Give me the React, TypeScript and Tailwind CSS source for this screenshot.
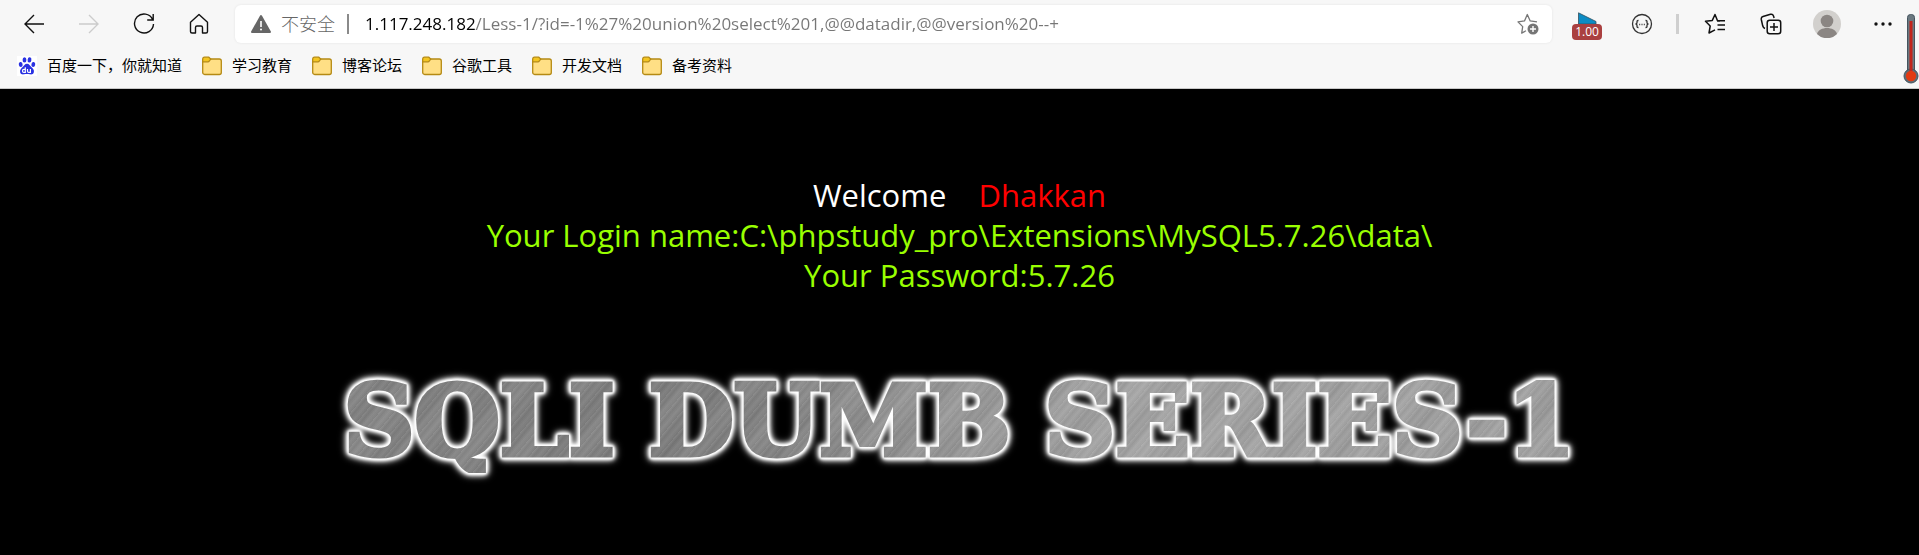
import React from 'react';

const url = '1.117.248.182/Less-1/?id=-1%27%20union%20select%201,@@datadir,@@version%20--+';

const folders = ['学习教育', '博客论坛', '谷歌工具', '开发文档', '备考资料'];

interface ToolButtonProps {
    label: string;
    disabled?: boolean;
    children: React.ReactNode;
}

const ToolButton: React.FC<ToolButtonProps> = ({ label, disabled, children }) => (
    <button type="button" aria-label={label} disabled={disabled} className="flex h-8 w-8 shrink-0 items-center justify-center">
        {children}
    </button>
);

const IconArrow: React.FC<{ className: string }> = ({ className }) => (
    <svg width="22" height="22" viewBox="0 0 22 22" fill="none" stroke="currentColor" strokeWidth="1.4" className={className}>
        <path d="M21 11H2M11 2L2 11l9 9" />
    </svg>
);

const IconReload: React.FC = () => (
    <svg width="22" height="22" viewBox="0 0 22 22" fill="none" stroke="#111" strokeWidth="1.4">
        <path d="M19.6 6.4A9.5 9.5 0 1 0 20.5 11M20.2 1v6h-6" />
    </svg>
);

const IconHome: React.FC = () => (
    <svg width="22" height="22" viewBox="0 0 22 22" fill="none" stroke="#111" strokeWidth="1.4" strokeLinejoin="round">
        <path d="M2.5 9.2L11 1.6l8.500 7.600V18.500a1.500 1.500 0 0 1-1.500 1.500h-3.500v-5.500a1.500 1.500 0 0 0-1.500-1.500h-4a1.500 1.500 0 0 0-1.500 1.500V20H4a1.500 1.500 0 0 1-1.500-1.500z" />
    </svg>
);

const IconWarning: React.FC = () => (
    <svg width="20" height="20" viewBox="0 0 20 20" className="shrink-0">
        <path d="M10 2L19 18H1z" fill="#666" stroke="#666" strokeWidth="2" strokeLinejoin="round" />
        <path d="M10 7v6" stroke="#fff" strokeWidth="1.600" />
        <circle cx="10" cy="15.500" r="1" fill="#fff" />
    </svg>
);

const IconStarAdd: React.FC = () => (
    <svg width="22" height="22" viewBox="0 0 22 22" fill="none">
        <path d="M9 17.800l-4.300 2.300 1-6.500L1 8.900l6.500-1L10.300 1.500l2.900 6.400 6.800 1" stroke="#767676" strokeWidth="1.300" strokeLinejoin="round" />
        <circle cx="16" cy="16" r="5.500" fill="#767676" />
        <path d="M16 13v6M13 16h6" stroke="#fff" strokeWidth="1.400" />
    </svg>
);

const IconBraces: React.FC = () => (
    <svg width="22" height="22" viewBox="0 0 22 22" fill="none" stroke="#333" strokeWidth="1.300">
        <circle cx="11" cy="11" r="9.500" />
        <path d="M7.500 7.500H7q-1 0-1 1V10l-1 1 1 1v1.500q0 1 1 1h.5M14.500 7.500h.5q1 0 1 1V10l1 1-1 1v1.500q0 1-1 1h-.5" />
        <path d="M8.200 11.500h1M10.500 11.500h1M12.800 11.500h1" />
    </svg>
);

const IconFavorites: React.FC = () => (
    <svg width="22" height="22" viewBox="0 0 22 22" fill="none" stroke="#111" strokeWidth="1.500" strokeLinejoin="round">
        <path d="M16 7.800h-2.500L11 1.500 8.300 7.400 1.500 8.300l4.700 4.700L5 20l6-3.200" />
        <path d="M13 7.800h8M13.500 12h7.500M13.500 16.500h7.500" />
    </svg>
);

const IconCollections: React.FC = () => (
    <svg width="22" height="22" viewBox="0 0 22 22" fill="none" stroke="#111" strokeWidth="1.500">
        <path d="M5 15.500C3.500 15 3 14 2.700 12.800L1.300 6.500C1 4.800 1.500 4 3 3.500l7.500-2.200c1.500-.4 2.500.2 3 1.700l.6 2" />
        <rect x="7.200" y="7.200" width="13.500" height="13.500" rx="2.500" />
        <path d="M14 10v8M10 14h8" />
    </svg>
);

const IconAvatar: React.FC = () => (
    <svg width="28" height="28" viewBox="0 0 28 28">
        <circle cx="14" cy="14" r="14" fill="#d2d0cd" />
        <circle cx="14" cy="11" r="6.300" fill="#8b8683" />
        <path d="M4 24c2-8 18-8 20 0A14 14 0 0 1 4 24z" fill="#8b8683" />
    </svg>
);

const IconFolder: React.FC = () => (
    <svg width="20" height="20" viewBox="0 0 20 20" className="shrink-0">
        <rect x="0.700" y="3" width="18.600" height="15.500" rx="2" fill="#ffdf85" stroke="#b58a14" strokeWidth="1.300" />
        <path d="M.7 5.800V3q0-1.800 1.800-1.800h4.300L8.800 3 7.200 5.200q-.4.600-1.200.6z" fill="#f3c522" stroke="#b58a14" strokeWidth="1.200" />
    </svg>
);

const IconBaidu: React.FC = () => (
    <svg width="20" height="20" viewBox="0 0 20 20" className="shrink-0">
        <rect width="20" height="20" fill="#fff" />
        <g fill="#2a32e2">
            <ellipse cx="3.700" cy="8.500" rx="1.900" ry="2.500" transform="rotate(-12 3.700 8.500)" />
            <ellipse cx="7.500" cy="3.900" rx="1.900" ry="2.700" />
            <ellipse cx="12.500" cy="3.900" rx="1.900" ry="2.700" transform="rotate(8 12.500 3.900)" />
            <ellipse cx="16.300" cy="8.500" rx="1.900" ry="2.500" transform="rotate(12 16.300 8.500)" />
            <path d="M10 7.800c2.200 0 3 1.900 4.300 3.300 1.500 1.500 3 2.600 2.600 4.800-.4 2.300-2.200 2.700-4 2.400-2-.3-3.800-.3-5.800 0-1.900.3-3.600-.1-4-2.400-.3-2.200 1.200-3.300 2.600-4.800C7 9.700 7.800 7.800 10 7.800z" />
        </g>
        <path d="M8.300 11.200v5.200H6.800q-1.300 0-1.300-1.500t1.300-1.500h1.500M10.500 13v2.200q0 1.200 1.200 1.200h1.700V13" fill="none" stroke="#fff" strokeWidth="1.200" />
    </svg>
);

const IconThermometer: React.FC = () => (
    <svg width="16" height="72" viewBox="0 0 16 72">
        <rect x="4.500" y="1.500" width="7" height="62" rx="3" fill="#6b7880" stroke="#44545f" />
        <circle cx="8" cy="63" r="7" fill="#5f6d76" stroke="#44545f" />
        <rect x="6.500" y="8" width="3" height="52" fill="#c2251c" />
        <circle cx="8" cy="63" r="5.200" fill="#e23a12" />
    </svg>
);

const Bookmark: React.FC<{ icon: React.ReactNode; label: string }> = ({ icon, label }) => (
    <a href="#" className="flex items-center gap-[10px]">
        {icon}
        <span>{label}</span>
    </a>
);

const App: React.FC = () => {
    return (
        <div className="flex min-h-screen flex-col bg-black font-['Open_Sans','Noto_Sans_CJK_SC',sans-serif]">
            <header className="relative h-[89px] border-b border-[#c8c8c8] bg-[#f7f7f7]">
                <div className="flex h-12 items-center pl-[18px] pr-5">
                    <nav className="flex items-center gap-[23px]">
                        <ToolButton label="后退"><IconArrow className="text-[#111]" /></ToolButton>
                        <ToolButton label="前进" disabled><IconArrow className="rotate-180 text-[#ccc]" /></ToolButton>
                        <ToolButton label="刷新"><IconReload /></ToolButton>
                        <ToolButton label="主页"><IconHome /></ToolButton>
                    </nav>

                    <div className="ml-5 flex h-[38px] flex-1 items-center rounded-md bg-white pl-4 pr-2 shadow-[0_0_3px_rgba(0,0,0,0.08)]">
                        <IconWarning />
                        <label htmlFor="address" className="ml-[10px] text-[18px] font-light text-[#666]">不安全</label>
                        <span className="ml-3 h-5 w-[2px] bg-[#8a8a8a]" />
                        {/* host is black, the rest of the address is grey */}
                        <input
                            id="address"
                            type="text"
                            defaultValue={url}
                            spellCheck={false}
                            className="ml-4 min-w-0 flex-1 bg-[linear-gradient(to_right,#000_111px,#767676_111px)] bg-clip-text text-[17px] text-transparent caret-black outline-none"
                        />
                        <ToolButton label="收藏"><IconStarAdd /></ToolButton>
                    </div>

                    <div className="ml-5 flex items-center gap-6">
                        <button type="button" className="flex w-[30px] flex-col items-center pt-1">
                            <svg width="20" height="12" viewBox="0 0 20 12">
                                <path d="M1.500 .8L19 9.500V12H1.500z" fill="#0d8cc4" stroke="#34505e" strokeWidth="0.800" />
                            </svg>
                            <span className="w-full rounded-sm bg-[#aa4040] text-center text-[12px] leading-4 text-white">1.00</span>
                        </button>
                        <ToolButton label="脚本"><IconBraces /></ToolButton>
                        <span className="-ml-[6px] -mr-1 h-5 w-[3px] bg-[#cfcfcf]" />
                        <ToolButton label="收藏夹"><IconFavorites /></ToolButton>
                        <ToolButton label="集锦"><IconCollections /></ToolButton>
                        <ToolButton label="用户"><IconAvatar /></ToolButton>
                        <ToolButton label="更多">
                            <svg width="18" height="4" viewBox="0 0 18 4" fill="#111">
                                <circle cx="2" cy="2" r="1.700" />
                                <circle cx="9" cy="2" r="1.700" />
                                <circle cx="16" cy="2" r="1.700" />
                            </svg>
                        </ToolButton>
                    </div>
                </div>

                <div className="flex h-[35px] items-center gap-5 pl-[17px] text-[15px] text-black">
                    <Bookmark icon={<IconBaidu />} label="百度一下，你就知道" />
                    {folders.map(name => (
                        <Bookmark key={name} icon={<IconFolder />} label={name} />
                    ))}
                </div>

                <div className="absolute right-0 top-[13px]">
                    <IconThermometer />
                </div>
            </header>

            <main className="flex flex-1 flex-col items-center pt-[86px]">
                <div className="text-center text-[31px] leading-10 text-[#99ff00]">
                    <p className="whitespace-pre text-white">Welcome    <span className="text-[#ff0000]">Dhakkan</span></p>
                    <p>Your Login name:C:\phpstudy_pro\Extensions\MySQL5.7.26\data\</p>
                    <p>Your Password:5.7.26</p>
                </div>

                <div className="mt-[74px] [filter:drop-shadow(0_0_1px_#fff)_drop-shadow(0_0_1px_#fff)_drop-shadow(0_0_1px_#fff)_drop-shadow(0_0_2px_#fff)_drop-shadow(0_0_3px_#fff)]">
                    <h1 className="whitespace-nowrap bg-[repeating-linear-gradient(130deg,rgba(255,255,255,0.07)_0px,rgba(0,0,0,0.05)_3px,rgba(255,255,255,0.05)_7px,rgba(0,0,0,0.03)_11px),repeating-linear-gradient(130deg,rgba(0,0,0,0.05)_0px,rgba(255,255,255,0.06)_17px,rgba(0,0,0,0.05)_43px),linear-gradient(to_right,#858585,#808080_30%,#9a9a9a_50%,#a6a6a6_65%,#a0a0a0)] bg-clip-text font-['DejaVu_Serif',serif] text-[98px] font-bold leading-[104px] text-transparent [-webkit-text-stroke:5px_transparent]">
                        SQLI DUMB SERIES-1
                    </h1>
                </div>
            </main>
        </div>
    );
};

export default App;
